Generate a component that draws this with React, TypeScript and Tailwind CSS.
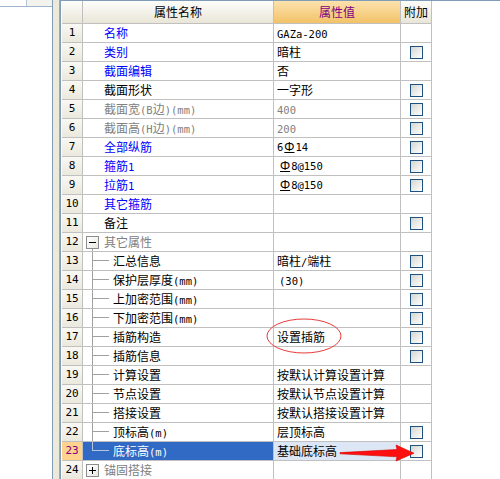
import React from "react";

type Row = {
  n: number;
  name: string;
  color?: "blue" | "black" | "gray";
  v?: string;
  vGray?: boolean;
  cb?: boolean;
  kind?: "normal" | "child" | "group";
  expanded?: boolean;
  last?: boolean;
  sel?: boolean;
  vPad?: boolean;
};

const rows: Row[] = [
  { n: 1, name: "名称", color: "blue", v: "GAZa-200" },
  { n: 2, name: "类别", color: "blue", v: "暗柱", cb: true },
  { n: 3, name: "截面编辑", color: "blue", v: "否" },
  { n: 4, name: "截面形状", color: "black", v: "一字形", cb: true },
  { n: 5, name: "截面宽(B边)(mm)", color: "gray", v: "400", vGray: true, cb: true },
  { n: 6, name: "截面高(H边)(mm)", color: "gray", v: "200", vGray: true, cb: true },
  { n: 7, name: "全部纵筋", color: "blue", v: "6Φ14", cb: true },
  { n: 8, name: "箍筋1", color: "blue", v: "Φ8@150", cb: true, vPad: true },
  { n: 9, name: "拉筋1", color: "blue", v: "Φ8@150", cb: true, vPad: true },
  { n: 10, name: "其它箍筋", color: "blue", v: "" },
  { n: 11, name: "备注", color: "black", v: "", cb: true },
  { n: 12, name: "其它属性", kind: "group", expanded: true },
  { n: 13, name: "汇总信息", kind: "child", v: "暗柱/端柱", cb: true },
  { n: 14, name: "保护层厚度(mm)", kind: "child", v: "(30)", cb: true, vPad: true },
  { n: 15, name: "上加密范围(mm)", kind: "child", v: "", cb: true },
  { n: 16, name: "下加密范围(mm)", kind: "child", v: "", cb: true },
  { n: 17, name: "插筋构造", kind: "child", v: "设置插筋", cb: true },
  { n: 18, name: "插筋信息", kind: "child", v: "", cb: true },
  { n: 19, name: "计算设置", kind: "child", v: "按默认计算设置计算" },
  { n: 20, name: "节点设置", kind: "child", v: "按默认节点设置计算" },
  { n: 21, name: "搭接设置", kind: "child", v: "按默认搭接设置计算" },
  { n: 22, name: "顶标高(m)", kind: "child", v: "层顶标高", cb: true },
  { n: 23, name: "底标高(m)", kind: "child", v: "基础底标高", cb: true, last: true, sel: true },
  { n: 24, name: "锚固搭接", kind: "group", expanded: false },
];

function Checkbox() {
  return (
    <div className="h-[13px] w-[13px] border border-[#1c5180] bg-linear-to-br from-[#d6d6d0] to-white" />
  );
}

function Mixed({ text }: { text: string }) {
  const parts = text.match(/[\x20-\x7e]+|[^\x20-\x7e]+/g) || [];
  return (
    <span>
      {parts.map((p, i) =>
        /^[\x20-\x7e]+$/.test(p) ? (
          <span key={i} className="font-['DejaVu_Sans_Mono',monospace] text-[10.5px]">
            {p}
          </span>
        ) : (
          <span key={i}>{p}</span>
        )
      )}
    </span>
  );
}

function ValueText({ r }: { r: Row }) {
  const v = r.v || "";
  if (v.includes("Φ")) {
    const i = v.indexOf("Φ");
    return (
      <span className="font-['DejaVu_Sans_Mono',monospace] text-[10.5px]">
        {v.slice(0, i)}
        <span className="mx-px font-['Noto_Sans',sans-serif] text-[12px] underline decoration-1 underline-offset-[1px]">
          Φ
        </span>
        {v.slice(i + 1)}
      </span>
    );
  }
  return <Mixed text={v} />;
}

function NameCell({ r }: { r: Row }) {
  const colorCls =
    r.color === "blue" ? "text-[#0000ff]" : r.color === "gray" ? "text-[#808080]" : "text-black";
  if (r.kind === "group") {
    return (
      <div className="relative flex h-full items-center">
        <div className="ml-[3px] flex h-[13px] w-[13px] shrink-0 items-center justify-center border border-[#8c8c8c] bg-linear-to-br from-white to-[#e8e8e4]">
          <div className="relative flex h-[7px] w-[7px] items-center justify-center">
            <div className="h-px w-[7px] bg-black" />
            {!r.expanded && <div className="absolute left-[3px] top-0 h-[7px] w-px bg-black" />}
          </div>
        </div>
        {r.expanded && <div className="absolute bottom-0 left-[9px] top-[16px] w-px bg-[#a0a0a0]" />}
        <span className="ml-[5px] text-[#808080]">{r.name}</span>
      </div>
    );
  }
  if (r.kind === "child") {
    const line = r.sel ? "border-[#b8c4dc]" : "border-[#a0a0a0]";
    return (
      <div className="flex h-full items-stretch">
        <div className="w-[9px] shrink-0" />
        <div className="flex w-[17px] shrink-0 flex-col">
          <div className={`h-[9px] border-b border-l ${line}`} />
          {!r.last && <div className={`flex-1 border-l ${line}`} />}
        </div>
        <span className={`ml-[4px] flex items-center ${r.sel ? "text-white" : "text-black"}`}>
          <Mixed text={r.name} />
        </span>
      </div>
    );
  }
  return (
    <div className="flex h-full items-center pl-[21px]">
      <span className={colorCls}>
        <Mixed text={r.name} />
      </span>
    </div>
  );
}

function TableRow({ r }: { r: Row }) {
  return (
    <div className="flex h-[19px]">
      <div
        className={`flex w-[21px] shrink-0 items-center justify-center border-b border-r border-[#c0c0c0] font-['DejaVu_Sans_Mono',monospace] text-[11px] ${
          r.sel ? "bg-[#fdd38e] text-[#800080]" : "bg-linear-to-b from-[#f9f8f3] to-[#ebe9dd] text-black"
        }`}
      >
        {r.n}
      </div>
      <div
        className={`w-[191px] shrink-0 border-b border-r border-[#c0c0c0] ${r.sel ? "bg-[#316ac5]" : "bg-white"}`}
      >
        <NameCell r={r} />
      </div>
      <div
        className={`flex w-[127px] shrink-0 items-center border-b border-r border-[#c0c0c0] ${
          r.vPad ? "pl-[5px]" : "pl-[3px]"
        } ${r.sel ? "bg-[#dce6f4]" : "bg-white"} ${r.vGray ? "text-[#808080]" : "text-black"}`}
      >
        <ValueText r={r} />
      </div>
      <div className="flex w-[31px] shrink-0 items-center justify-center border-b border-r border-[#c0c0c0] bg-white">
        {r.cb && <Checkbox />}
      </div>
    </div>
  );
}

export default function App() {
  return (
    <div className="relative flex h-[479px] w-[500px] overflow-hidden bg-white font-['Noto_Sans_CJK_SC','Noto_Sans',sans-serif] text-[12px] leading-[18px]">
      <div className="flex w-[53px] shrink-0 flex-col border-r border-[#7f9db9] bg-white">
        <div className="flex h-[7px] border-b border-[#9fb4cf]">
          <div className="w-[27px] border-r border-[#b5c6dc] bg-white" />
          <div className="flex-1 bg-[#f3f3ee]" />
        </div>
      </div>
      <div className="w-[7px] shrink-0 border-r border-[#aca899] bg-[#ece9d8]" />
      <div className="flex-1 border-l border-t border-[#7f9db9] bg-white">
        <div className="ml-px w-[370px]">
          <div className="flex h-[23px]">
            <div className="w-[21px] shrink-0 border-b border-r border-[#c0c0c0] bg-linear-to-b from-[#fdfdfa] to-[#e9e6d8]" />
            <div className="flex w-[191px] shrink-0 items-center justify-center border-b border-r border-[#c0c0c0] bg-linear-to-b from-[#fdfdfa] to-[#e9e6d8] text-black">
              属性名称
            </div>
            <div className="flex w-[127px] shrink-0 items-center justify-center border-b border-r border-[#c0c0c0] bg-linear-to-b from-[#fce2ac] to-[#f2c267] text-[#800080]">
              属性值
            </div>
            <div className="flex w-[31px] shrink-0 items-center justify-center border-b border-r border-[#c0c0c0] bg-linear-to-b from-[#fdfdfa] to-[#e9e6d8] text-black">
              附加
            </div>
          </div>
          {rows.map((r) => (
            <TableRow key={r.n} r={r} />
          ))}
        </div>
      </div>
      <svg className="pointer-events-none absolute left-0 top-0 h-[479px] w-[500px]" viewBox="0 0 500 479">
        <ellipse cx="304" cy="336" rx="37" ry="17" fill="none" stroke="#e83a3a" strokeWidth="1" />
        <polygon
          points="340,452.6 397,449.5 396,445 414,453.2 396,461 397,456.8 340,453.8"
          fill="#ff1010"
          stroke="#d00000"
          strokeWidth="0.6"
        />
      </svg>
    </div>
  );
}
